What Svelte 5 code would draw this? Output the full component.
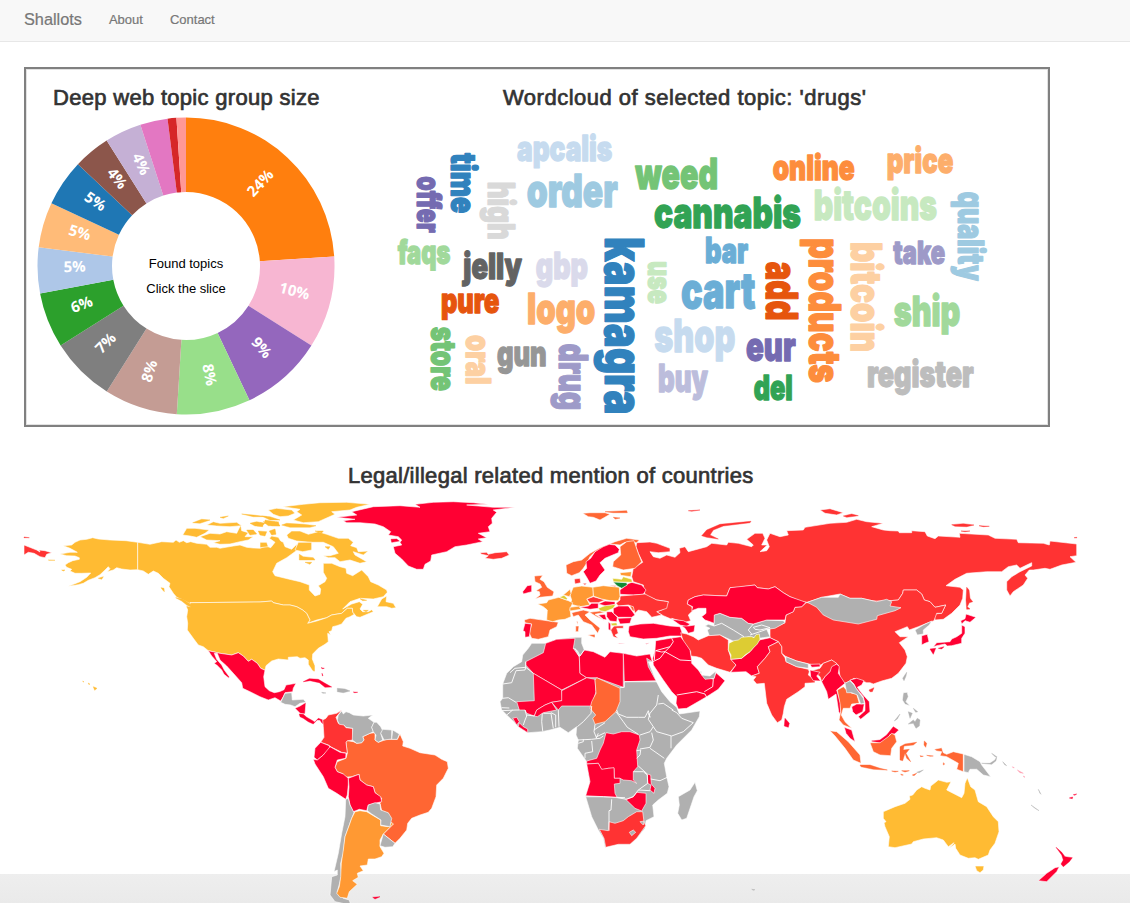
<script>
  const R = 148.5, r = 74;
  const slices = [
    [0, 86.3, '#ff7f0e', '24%'], [86.3, 122.4, '#f7b6d2', '10%'], [122.4, 154.7, '#9467bd', '9%'],
    [154.7, 183.55, '#98df8a', '8%'], [183.55, 212.25, '#c49c94', '8%'], [212.25, 237.6, '#7f7f7f', '7%'],
    [237.6, 259.3, '#2ca02c', '6%'], [259.3, 277.3, '#aec7e8', '5%'], [277.3, 295, '#ffbb78', '5%'],
    [295, 313.3, '#1f77b4', '5%'], [313.3, 327.7, '#8c564b', '4%'], [327.7, 342.1, '#c5b0d5', '4%'],
    [342.1, 352.85, '#e377c2', ''], [352.85, 356.3, '#d62728', ''], [356.3, 360, '#ff9896', '']
  ];
  const polar = (a, d) => {
    const t = (a * Math.PI) / 180;
    return [+(Math.sin(t) * d).toFixed(2), +(-Math.cos(t) * d).toFixed(2)];
  };
  const arc = ([a, b]) =>
    `M${polar(a, R)}A${R},${R} 0 0 1 ${polar(b, R)}L${polar(b, r)}A${r},${r} 0 0 0 ${polar(a, r)}Z`;
  const labelAt = ([a, b]) => {
    const m = (a + b) / 2;
    return `translate(${polar(m, 111.3)}) rotate(${m > 180 ? m + 90 : m - 90})`;
  };

  // word, start, end, baseline, ascender height, colour
  const across = [
    ['apcalis', 517, 612.3, 161.7, 25.3, '#c6dbef'], ['order', 526.7, 617.7, 207, 32.7, '#9ecae1'],
    ['weed', 635.3, 718, 189.3, 30.6, '#74c476'], ['cannabis', 654, 801, 228, 31, '#31a354'],
    ['faqs', 397.7, 450.3, 264.7, 23.7, '#a1d99b'], ['jelly', 463.3, 522, 279, 25.7, '#636363'],
    ['gbp', 535.7, 588, 278.9, 27, '#dadaeb'], ['pure', 441, 499.3, 313.7, 24.5, '#e6550d'],
    ['logo', 527, 595.3, 324, 30.7, '#fdae6b'], ['gun', 497, 546.7, 366.7, 25.5, '#969696'],
    ['cart', 681, 755.3, 308, 35.5, '#6baed6'], ['bar', 705, 748, 263, 25.5, '#6baed6'],
    ['shop', 654.3, 735.3, 352.3, 33, '#c6dbef'], ['buy', 658, 708, 392, 27.7, '#bcbddc'],
    ['online', 772.7, 854.7, 180, 25, '#fd8d3c'], ['price', 886.7, 953.3, 173, 25.5, '#fdae6b'],
    ['bitcoins', 813.7, 937, 220, 30, '#c7e9c0'], ['take', 893.3, 945, 264, 23, '#9e9ac8'],
    ['ship', 893.7, 960.3, 326, 30, '#a1d99b'], ['eur', 746, 795.7, 361, 28.5, '#756bb1'],
    ['del', 753.7, 792.7, 400, 24.7, '#31a354'], ['register', 867, 973.7, 387, 26, '#bdbdbd']
  ];
  const down = [
    ['kamagra', 237, 414.7, 605, 38.5, '#3182bd'], ['time', 153, 213.3, 450.7, 25.5, '#3182bd'],
    ['offer', 176.3, 232.7, 417, 24.3, '#756bb1'], ['high', 181.7, 240, 487.3, 26.7, '#d9d9d9'],
    ['store', 326.7, 391, 430.3, 25, '#74c476'], ['oral', 335, 384.7, 465.7, 25, '#fdd0a2'],
    ['drug', 343.7, 410, 558.3, 28.3, '#9e9ac8'], ['use', 261, 304, 648, 23, '#c7e9c0'],
    ['quality', 191.7, 281, 957.3, 25.7, '#9ecae1'], ['add', 261.7, 320.7, 765.7, 32, '#e6550d'],
    ['products', 238.3, 383, 808.5, 32, '#fd8d3c'], ['bitcoin', 242, 352.3, 851, 31, '#fdd0a2']
  ];
  const words = [
    ...across.map(([t, a, b, y, h, c]) => ({ t, w: b - a, h, c, tf: `translate(${a},${y - 0.4})` })),
    ...down.map(([t, a, b, x, h, c]) => ({ t, w: b - a, h, c, tf: `translate(${x + 0.4},${a}) rotate(90)` }))
  ];

  // Outlines are digitised per map sheet, three units to a pixel; a letter switches sheet.
  const sheets = {
    A: [20, 490], B: [260, 455], C: [260, 690], D: [490, 500],
    E: [490, 630], F: [670, 490], G: [870, 490], H: [780, 640]
  };
  function points(part) {
    let o = sheets.A;
    const pts = [];
    for (const tok of part.trim().split(/\s+/)) {
      if (sheets[tok]) { o = sheets[tok]; continue; }
      const [x, y] = tok.split(',').map(Number);
      pts.push([o[0] + x / 3, o[1] + y / 3]);
    }
    return pts;
  }
  const toPath = (pts) => 'M' + pts.map(([x, y]) => x.toFixed(1) + ',' + y.toFixed(1)).join('L');
  // Islands and slivers keep their own colour on the outline so that it does not eat them up.
  function isSliver(part, pts) {
    if (/^[DEF] /.test(part.trim())) return false;
    let area = 0, len = 0;
    pts.forEach(([x, y], i) => {
      const [u, v] = pts[(i + 1) % pts.length];
      area += x * v - u * y;
      len += Math.hypot(u - x, v - y);
    });
    return Math.abs(area) / 2 / len < 1.4;
  }

  const Y = '#ffbb33', C = '#ff0033', S = '#ff3333', O = '#ff6633', N = '#ff9933', G = '#b0b0b0', L = '#ddcc33', V = '#118833';
  const land = [
    // North America
    [Y, 'A 353,157 318,152 270,150 235,147 218,143 200,148 180,150 165,157 155,165 130,167 150,175 165,183 172,187 150,187 120,192 140,197 165,198 178,203 178,208 158,212 145,218 135,225 140,232 155,238 150,243 165,250 185,250 212,249 200,262 180,275 145,289 175,284 190,280 205,271 225,263 240,254 255,240 265,230 270,236 262,245 280,240 290,233 305,237 330,240 353,239'],
    [Y, 'A 353,157 390,163 425,155 460,157 468,150 478,157 490,152 500,158 512,155 530,160 560,163 570,172 590,172 600,175 640,168 660,165 680,172 700,174 720,175 B 18,273 32,278 45,262 28,250 35,243 55,247 62,258 70,262 75,275 95,283 110,268 112,285 80,308 50,325 38,350 45,362 85,372 120,380 148,390 148,405 165,423 180,418 182,402 175,392 195,380 200,370 190,352 190,325 215,325 240,335 258,340 260,355 278,362 305,345 325,365 332,380 355,390 380,405 382,412 370,425 340,432 300,430 270,440 248,462 275,447 298,440 308,448 300,462 308,470 325,470 335,464 340,470 300,487 290,485 278,472 277,460 262,460 245,475 215,480 200,488 170,495 143,505 150,495 145,485 140,475 128,465 110,455 90,450 70,450 40,443 35,438 0,441 A 510,338 515,350 517,345 490,330 470,322 460,310 447,290 450,280 430,265 415,250 400,243 385,253 370,243 353,239'],
    [Y, 'A 510,338 B 0,441 35,438 40,443 70,450 90,450 110,455 128,465 140,475 145,485 150,495 143,505 170,498 200,488 215,480 245,475 262,460 277,460 278,472 283,478 270,485 258,490 250,500 245,507 230,512 218,515 215,527 207,530 212,540 203,535 205,560 195,568 175,580 158,597 157,612 165,632 165,650 158,648 145,628 145,615 135,608 120,610 112,605 85,607 85,615 55,612 35,618 18,632 A 735,541 722,535 712,520 695,508 685,514 670,498 655,488 635,495 600,490 565,482 550,470 535,465 520,445 502,420 503,400 500,380 503,360 498,347 512,350'],
    [Y, 'A 467,323 490,328 505,338 516,345 517,353 500,345 485,333|A 423,293 432,295 433,305 428,300|A 235,265 250,260 245,268|A 220,590 231,595 224,601|A 188,573 192,576 190,576|A 205,579 210,583 206,583|A 85,210 105,211 88,211|A 125,240 135,240 130,243'],
    [Y, 'A 488,135 500,115 525,115 568,120 555,130 530,142 510,138|A 540,140 570,130 600,132 620,125 650,130 662,105 665,122 685,128 675,140 700,140 685,150 660,155 630,162 600,163 580,158 600,152 560,150|A 518,98 545,88 570,90 540,100|A 560,105 580,95 600,100 650,97 665,107 630,110 590,108|A 690,100 710,95 735,100 725,108 705,108|A 665,72 700,75 740,80 700,80|A 600,82 625,78 610,85|A 680,120 700,120 710,132 690,135|A 735,90 765,95 760,103 735,100|B 25,165 50,160 95,165 105,175 85,183 60,185 40,178|B 68,155 130,148 180,143 260,142 330,148 290,157 270,165 215,170 225,178 175,200 130,203 100,195 125,180 110,170 120,163|B 65,210 80,205 130,208 168,212 150,217 90,217|B 5,183 30,185 60,195 30,195|B 10,200 50,200 60,213 25,212|B 0,203 10,205 8,215 -10,213|B -5,228 20,230 15,243 0,240|B 28,228 45,222 48,238 35,240|B 30,205 55,200 58,212 35,212|B 0,262 20,262 25,275 0,278'],
    [Y, 'B 80,240 95,228 120,228 145,238 175,230 200,238 235,250 265,250 280,262 272,272 290,278 295,290 325,288 310,300 280,290 285,300 320,320 300,325 270,315 240,320 225,308 205,308 190,302 210,302 235,295 220,275 190,262 150,262 110,258 85,250|B 118,298 130,305 160,308 165,315 140,315 118,315|B 105,285 115,262 155,262 155,285 128,290|B 352,455 365,432 380,423 378,440 400,445 408,458 395,460 380,455|B 135,322 155,322 150,328|B 165,228 190,228 185,234|B 195,275 210,275 205,283|B 310,466 325,466 318,470|B 300,431 320,436 308,437'],
    [C, 'B 230,187 290,180 275,170 340,155 420,152 480,157 465,148 520,142 580,140 640,143 685,148 620,150 700,157 765,157 700,165 710,172 695,190 697,205 685,215 690,230 655,235 680,248 655,252 668,260 620,270 585,275 560,290 515,300 512,318 495,328 490,343 470,343 445,333 425,312 405,295 400,275 425,270 420,262 425,255 415,245 385,240 392,230 370,215 345,207 300,203 260,203 250,197 285,193|B 393,253 410,252 418,258 395,262'],
    [S, 'B 660,293 680,292 685,298 705,293 740,290 748,300 725,310 700,313 675,310 685,302 665,298|A 12,165 50,180 60,186 57,180 75,182 95,188 80,193 75,203 60,200 42,190 25,187 12,195|A 12,141 28,143 12,143'],
    [C, 'A 565,482 600,490 635,495 655,488 670,498 685,514 695,508 712,520 722,535 735,541 731,560 735,590 748,602 763,608 B 58,710 72,704 78,690 108,685 100,700 98,710 75,713 70,725 62,738 45,728 25,735 0,725 A 690,605 668,595 665,578 640,550 620,528 600,510 592,490 583,490 590,508 605,525 613,540 628,560 627,565 612,553 605,540 590,525 582,520 590,515 575,498'],
    [C, 'B 130,680 148,671 175,673 195,685 215,696 195,697 178,683 150,677|B 280,711 293,712 284,713|B 183,638 193,640 188,641|B 186,655 189,662 187,662|C 105,55 120,48 138,37 135,72 120,70|C 118,72 130,73 140,82 158,92 165,97 175,85 188,90 190,102 185,98 180,90 170,90 160,102 145,95 130,85 120,80'],
    [G, 'B 75,715 95,713 97,735 130,733 138,742 120,745 105,755 92,750 75,748 62,742|B 232,700 255,702 270,708 250,713 232,710|B 185,712 198,714 188,715'],
    // South America
    [O, 'C 345,128 345,150 355,157 380,148 412,148 420,132 430,155 428,168 450,175 480,188 525,195 545,208 562,215 565,235 550,265 530,285 528,320 515,355 505,367 480,375 455,385 443,400 440,420 420,445 405,460 370,432 400,402 390,398 385,370 365,362 360,340 365,325 345,308 340,290 320,285 300,270 297,253 275,260 250,262 250,252 232,245 225,232 232,215 258,205 262,190 258,157 262,152 280,155 290,160 305,158 312,150 308,140 330,130'],
    [S, 'C 188,90 198,85 205,75 230,70 245,60 238,70 228,82 235,100 250,102 258,113 278,115 280,150 262,152 258,157 262,190 245,187 215,172 205,165 182,157 192,142 190,110'],
    [G, 'C 245,63 235,75 232,90 238,103 252,105 258,112 278,115 277,150 290,160 305,158 312,150 308,140 330,130 340,125 335,112 342,97 325,85 338,75 310,78 280,75 268,68 258,65 250,72|C 342,97 350,97 362,110 368,122 362,130 368,150 355,157 345,150 348,135 340,125 335,112|C 368,118 395,120 395,147 372,150 362,130|C 398,120 418,132 412,148 395,148'],
    [C, 'C 182,157 208,167 210,178 190,195 172,210 162,202 165,175|C 210,170 240,187 258,190 257,205 232,210 225,232 232,245 250,252 265,265 265,285 262,315 257,328 230,310 205,295 190,260 165,222 160,208 172,210 190,195|C 265,265 297,253 300,270 320,285 340,290 345,308 362,320 365,335 345,340 325,345 320,362 298,358 280,365 270,345 265,320 267,290|C 338,622 360,620 345,627'],
    [G, 'C 257,328 265,325 270,345 282,368 275,385 268,405 255,440 250,490 242,520 244,560 232,605 250,625 268,630 272,645 225,635 210,615 215,560 232,555 232,540 222,545 235,490 245,430 255,380'],
    [N, 'C 285,365 300,362 320,365 340,377 362,390 362,407 385,410 395,397 400,402 370,432 360,450 360,470 372,490 365,500 345,507 325,507 322,525 300,528 310,542 292,550 295,562 278,572 292,583 268,605 262,625 240,622 230,610 238,590 242,560 244,520 250,480 255,440 268,405 275,385'],
    [G, 'C 325,345 345,338 360,342 362,360 385,368 395,385 390,410 362,405 363,390 335,372 322,362|C 370,432 405,460 398,470 375,472 360,467'],
    // Russia
    [S, 'D 440,128 480,126 500,130 540,145 540,155 505,158 480,155 490,170 510,175 530,165 555,172 570,158 568,145 F 45,170 55,185 110,170 125,160 170,165 175,157 205,160 245,170 250,165 230,148 255,130 278,130 285,145 275,165 292,165 270,185 290,182 298,170 290,150 300,130 330,140 355,135 350,122 400,120 405,112 480,100 530,97 560,88 590,95 640,100 605,110 640,120 660,122 G 85,123 88,128 125,128 125,122 165,125 172,138 195,146 205,138 270,142 268,130 355,135 375,145 440,148 445,158 520,160 538,165 540,153 620,162 620,197 600,200 618,217 575,225 540,238 525,235 490,240 478,240 465,255 473,265 460,285 430,305 420,318 410,300 410,275 425,260 450,245 485,228 485,218 470,225 450,235 440,225 415,230 395,245 350,245 290,250 255,268 228,287 270,292 280,300 278,325 270,345 245,370 220,388 195,390 192,372 215,370 227,345 195,352 180,335 163,330 155,312 140,300 100,300 98,310 85,330 60,332 F 620,335 575,325 540,325 510,312 455,322 412,337 395,335 360,320 340,308 315,290 295,297 262,293 255,285 205,292 180,293 170,318 100,315 75,320 55,330 52,342 65,350 68,362 55,375 62,392 45,397 5,385 D 545,358 520,347 500,335 515,330 525,325 535,305 500,300 465,285 460,255 430,245 425,230 430,205 458,187 445,160 438,140'],
    [S, 'G -505,137 -490,120 -450,103 -357,94 -360,98 -440,108 -470,120 -480,135 -455,147 -490,142|G -150,60 -120,56 -80,68 -100,75 -135,70|G -80,78 -55,72 -35,77 -70,82|G 245,104 280,101 312,105 290,110 255,109|G 327,107 358,109 340,110|G 273,123 300,123 285,125|G 612,143 620,142 620,144|G 290,292 297,300 300,325 308,335 298,338 292,350 300,357 290,358 288,330|G -545,62 -510,60 -535,64|D 358,256 380,257 375,261'],
    [O, 'D 278,40 300,38 345,38 360,43 330,60 310,52 295,50|B 1035,170 1100,167 1102,173 1060,173|B 1060,187 1080,189 1066,192'],
    // Europe
    [O, 'D 228,195 250,185 275,180 300,160 330,143 375,125 410,115 448,120 440,128 405,127 390,135 360,132 335,148 315,155 300,170 290,190 280,205 268,218 245,227 230,220|D 390,140 410,125 432,122 438,140 445,160 455,185 435,205 400,210 368,200 370,185 392,165|D 133,228 158,226 150,238 162,245 172,262 192,275 188,288 150,292 135,297 150,285 148,275 138,272 155,262 150,252 135,245|D 245,338 280,330 300,335 285,345 300,360 325,380 330,385 323,400 305,375 280,365 265,345 250,350|D 293,405 315,403 315,413|D 257,378 267,378 265,395 257,395|D 260,363 264,365 262,375|D 103,360 120,355 205,367 200,380 180,390 175,410 145,418 125,415 118,400 125,372 105,368|D 298,337 330,333 345,337 315,343 345,362 320,350|D 418,315 435,320 442,332 428,333'],
    [C, 'D 302,175 315,155 340,140 358,133 375,135 388,148 385,158 368,165 345,175 330,188 345,210 330,225 318,243 300,250 292,235 280,215 290,205 288,185|D 98,275 112,257 125,255 125,275 100,282|D 105,370 124,372 118,410 105,412 105,395 99,392|D 390,270 412,252 425,247 455,255 468,270 460,283 430,285 390,283'],
    [S, 'D 253,237 270,235 272,248 255,252|D 278,250 290,250 285,256|D 390,288 430,285 465,282 500,300 535,305 530,325 500,335 515,345 485,352 470,335 445,330 435,340 430,320 415,315 385,318 378,310 390,300|D 290,297 310,290 345,300 325,308 300,308|D 362,390 372,378 400,377 400,385 380,385 385,400 375,405 385,415 370,410'],
    [N, 'D 308,262 340,257 388,262 390,290 385,302 360,302 335,297 310,288|D 250,262 275,258 308,262 310,288 290,297 300,315 270,320 240,312 245,300 240,285|D 220,285 240,268 243,280 238,290|D 143,312 170,308 175,300 207,292 235,302 248,308 240,328 243,350 225,358 205,360 188,365 170,360 172,330 160,320|D 240,322 270,318 272,328 240,333|D 390,218 425,215 422,230 392,226'],
    [L, 'D 208,292 222,286 232,295 230,300|D 368,235 395,238 400,230 425,238 427,247 370,246|D 325,325 345,317 378,312 370,325 345,335 330,332|D 362,370 380,368 382,377 365,377'],
    [V, 'D 370,246 410,248 412,255 395,265 382,258'],
    [C, 'D 325,312 345,303 375,305 375,313 345,317|D 268,322 295,318 305,310 325,310 325,325 300,328|D 370,325 385,318 415,318 428,335 435,345 425,352 385,352 370,340|D 383,355 425,353 420,370 390,372|D 325,345 345,343 350,360 340,358|D 350,335 365,335 382,352 380,365 360,363 350,350|D 355,365 362,372 362,392 355,388|D 417,378 450,372 490,370 540,378 570,380 580,408 540,408 500,415 460,417 420,410 415,395|D 545,358 580,362 600,372 590,380 570,375|D 575,378 595,378 615,375 612,395 595,400 585,385|D 466,431 478,428 470,433|D 383,430 405,432 388,432'],
    // Asia
    [S, 'F 408,338 G 60,332 85,330 98,310 100,300 140,300 155,312 163,330 180,335 195,352 227,345 215,370 200,370 192,392 170,400 145,410 118,420 112,410 75,425 90,440 115,440 88,458 105,480 112,500 108,520 85,550 65,565 35,573 10,582 0,578 F 590,578 575,572 552,565 530,578 520,580 510,560 505,525 485,510 460,520 445,530 418,522 380,513 348,500 335,490 335,470 325,455 300,443 300,415 315,412 345,398 348,375 370,365 375,352 395,350|G -3,600 12,593 7,605 0,605'],
    [G, 'F 412,337 455,322 505,322 510,312 540,325 575,325 620,335 G 50,328 65,335 60,348 93,353 75,362 22,377 20,388 F 565,402 490,390 460,375 440,352'],
    [G, 'F 132,375 150,370 180,382 215,385 235,400 250,402 290,390 340,392 345,398 315,415 290,418 300,440 268,445 235,440 200,458 150,435 118,437 112,420 120,415 105,408 115,403 132,408|G 98,565 110,547 108,558 102,572|G 135,420 160,405 185,393 178,405 160,420 160,432 142,435'],
    [C, 'F 55,330 75,320 100,315 170,318 180,293 255,285 262,293 295,297 315,290 340,308 360,320 408,337 395,350 375,352 370,365 348,375 345,390 290,390 250,402 235,400 215,385 180,382 150,370 133,375 132,400 120,395 105,390 95,380 108,370 108,355 85,355 65,362 68,350 52,342'],
    [S, 'F 32,428 50,432 70,440 85,450 115,437 150,435 175,450 175,480 185,510 198,525 180,547 140,535 115,525 95,505 80,500 62,498 62,485 40,455'],
    [C, 'F 182,508 215,505 240,485 268,450 300,443 325,455 295,470 300,485 285,505 262,530 268,550 245,558 228,545 182,547 198,525'],
    [L, 'F 177,460 192,452 205,450 215,442 235,440 245,440 252,443 258,434 268,432 270,448 262,462 252,472 240,485 225,495 215,505 182,508 183,495 175,480'],
    [S, 'F 325,455 335,470 335,490 345,503 348,515 380,530 415,538 418,545 415,555 435,570 435,578 405,580 405,590 385,605 350,628 343,650 340,670 335,690 322,698 305,675 290,640 283,580 260,582 250,570 258,560 245,558 268,550 262,530 285,505 300,485 295,470|F 450,535 460,520 485,510 500,520 480,545 465,560 455,575 450,560 425,542'],
    [G, 'F 348,500 380,513 415,522 415,535 380,530 348,515'],
    [C, 'F 420,523 450,522 450,530 425,532|F 420,540 450,547 440,558 452,573 430,572 422,560|G -255,685 -242,700 -245,712 -257,708|F 455,575 465,560 480,545 485,530 500,522 508,530 505,550 525,580 510,592 500,600 512,640 512,675 506,665 498,612 475,628 470,605'],
    [O, 'F 502,600 520,590 530,600 545,610 560,612 568,640 545,642 540,655 520,655 514,675 525,695 545,715 520,705 507,690 512,665 510,640'],
    [C, 'F 540,570 560,565 582,572 575,585 562,592 575,610 598,635 600,665 572,688 565,680 585,662 585,640 580,620 558,595 552,582|F 545,650 560,642 583,642 578,665 558,675 548,665'],
    [G, 'F 525,580 540,572 552,585 558,595 580,625 583,640 572,642 562,615 545,608 530,608'],
    [C, 'G 155,437 172,433 177,455 165,460 155,465|G 288,372 318,382 300,397 285,392 275,402 272,392 285,386|G 275,405 285,410 285,430 275,445 275,460 245,467 232,468 225,462 200,467 190,470 200,458 240,455 245,447 260,440 275,430|G 180,477 197,475 190,493 185,485|G 205,475 222,470 215,477'],
    [C, 'E 497,32 540,25 572,20 600,60 605,92 F 65,520 85,540 95,555 130,568 138,548 165,572 145,598 110,620 50,655 25,657 18,640 E 560,200 545,185 520,150 490,105 488,85 495,60'],
    [G, 'F 95,555 120,558 138,543 133,565 105,568|F 90,543 95,545 94,552'],
    // Africa
    [G, 'E 125,40 167,40 200,28 255,22 275,22 275,40 283,60 310,65 345,82 360,65 400,70 440,78 480,72 487,95 475,95 498,152 515,185 540,215 560,232 568,252 630,243 628,260 605,300 560,345 530,385 523,400 530,440 537,470 532,490 505,510 488,525 492,560 468,572 465,595 440,625 420,643 385,643 345,652 340,625 325,600 305,560 287,500 300,460 290,395 262,355 265,330 258,315 260,290 235,308 210,292 180,300 155,305 115,308 85,290 68,272 50,255 35,240 30,215 38,205 38,162 50,130 70,110 95,95 98,75 115,55|E 615,457 622,482 612,500 590,565 575,570 563,550 568,525 565,500 600,480'],
    [C, 'E 167,40 200,28 255,25 250,55 268,80 270,130 290,143 215,180 130,130 107,105 107,95 160,68|E 283,60 310,65 345,82 360,65 400,70 400,172 320,143 290,143 270,130 268,80|E 400,70 440,78 480,72 487,95 470,85 475,110 498,152 403,155|E 130,130 215,180 217,212 185,217 165,225 140,240 133,258 110,250 105,240 88,240 80,215 133,212|E 133,258 140,240 165,225 185,217 200,240 160,248 142,260|E 215,182 290,143 315,148 318,185 305,228 215,228 205,240 185,217 215,212|E 348,308 370,312 395,305 420,305 448,315 450,330 440,360 443,410 430,425 430,450 440,460 425,452 400,450 390,445 373,445 372,415 355,415 335,420 325,400 290,402 290,393 320,385 330,360 340,340|E 290,402 325,400 335,418 355,415 372,413 373,445 390,445 390,460 373,462 375,490 382,503 340,500 287,497 300,455|E 407,508 430,500 440,487 468,490 468,520 455,543 435,535|E 472,432 482,435 484,462 495,475 492,490 480,480 483,465 473,460|E 68,265 80,262 88,275 80,285|E 88,278 100,290 113,297 113,308 85,290'],
    [O, 'E 320,143 390,175 390,215 378,245 345,275 315,283 308,265 317,255 300,235 305,215 318,190 315,150'],
    [S, 'E 328,598 355,602 357,575 375,580 400,572 415,560 440,545 458,545 462,575 467,587 440,625 420,643 385,643 347,652 342,625'],
    [G, 'E 418,607 430,600 437,607 425,617|E 450,575 462,573 460,585'],
    // Oceania and the archipelagos
    [C, 'H 193,262 215,270 225,305 210,295 198,280|H 275,303 300,300 320,285 340,260 355,270 345,280 330,282 320,300 300,308|H 868,474 878,471 877,476|H 880,464 890,462 884,466|H 828,622 845,637 855,650 877,653 868,665 850,680 843,672 850,660 845,645|H 838,680 830,695 800,725 775,722 800,700 825,683'],
    [O, 'H 150,272 170,275 205,305 240,345 243,370 220,360 195,325 165,288|H 240,375 270,375 300,385 322,390 280,388 243,380|H 335,393 355,394 345,396|H 365,392 388,392 375,396|H 362,402 370,405 365,406|H 397,405 410,400 402,407|H 270,308 300,308 325,290 335,280 345,285 350,305 335,325 332,347 300,345 280,335|H 360,320 375,312 410,307 400,315 372,318 370,330 388,328 378,340 392,365 380,355 375,340 368,362 360,360|H 433,303 440,310 437,322 432,315|H 420,347 430,349 422,350|H 440,346 460,348 450,349|H 490,368 494,372 490,375|H 462,328 485,323 490,338 500,343 520,335 550,342 550,395 530,388 535,370 500,350 480,347 485,335 470,333'],
    [G, 'H 552,343 575,350 600,365 605,375 632,410 610,405 590,388 570,388 565,398 552,395|H 605,370 630,370 645,360 650,350 648,362 635,373|H 635,340 650,350 645,350|H 668,365 680,377 674,374|H 370,158 382,157 385,170 378,185 390,197 375,193 367,180|H 400,240 405,245 412,235 420,240 418,258 408,265 400,250 385,252|H 385,215 397,220 390,235|H 400,205 413,215 407,217|H 343,243 360,222 352,237|H 410,397 430,390 418,398|H 753,495 777,512 765,505|H 775,448 783,463 780,460|C 1475,598 1485,599 1480,601'],
    ['#ff9aad', 'H 697,380 703,383 699,383|H 712,390 730,400 720,398|H 730,408 735,411 732,412'],
    [Y, 'H 310,515 345,500 375,490 390,478 388,468 398,465 410,450 425,440 435,445 450,450 452,438 463,430 475,420 500,427 513,425 500,450 545,473 552,460 555,430 562,413 572,440 585,450 595,485 620,500 640,530 655,545 657,575 645,610 630,630 625,645 595,658 585,653 565,655 540,645 527,625 525,612 508,625 522,608 505,620 490,600 470,593 430,597 400,605 395,612 345,623 325,620 328,590 315,560 312,548 318,545 310,535|H 585,678 612,678 610,690 600,698 590,692']
  ];
  const borders = [
    // Central Asia and the Middle East
    'F 132,408 155,400 190,420 222,440', 'F 250,402 235,420 245,432', 'F 250,412 275,405 300,413 270,420 255,418 250,412', 'F 290,418 270,425 240,435',
    'E 497,62 540,50 550,35 545,25', 'E 488,95 510,85 525,65 570,90 605,92', 'E 497,62 515,66 525,65 540,50', 'F 20,615 80,605 105,612 110,622', 'F 103,605 128,590 130,568', 'E 495,62 493,90',
    // Africa
    'E 107,95 107,112 75,115 60,128', 'E 107,112 105,120 78,122 65,158 38,162', 'E 105,110 130,130', 'E 38,205 55,203 78,217', 'E 35,233 58,234', 'E 35,242 78,240 88,240', 'E 50,255 68,240', 'E 105,240 110,258 105,270 100,285', 'E 110,255 133,258', 'E 157,250 155,275 158,303', 'E 160,250 183,250 190,295', 'E 183,248 197,255 197,292', 'E 205,240 207,290',
    'E 305,228 303,250 280,275 262,290', 'E 315,283 312,305 320,325', 'E 312,300 345,278', 'E 378,245 400,275 412,292 445,313', 'E 320,320 345,308', 'E 390,173 403,172 403,155 505,155', 'E 380,240 385,252 410,262 445,262 465,262 475,242 480,262 475,250',
    'E 505,195 500,225 480,250 475,268 490,290 480,305 450,315', 'E 505,222 520,220 550,240', 'E 545,240 560,248 575,265 610,278 580,305 545,318 500,305 490,290', 'E 543,318 543,355', 'E 485,308 490,330 480,352 450,357', 'E 480,355 523,385', 'E 440,362 452,360 450,375 440,385', 'E 445,408 472,432', 'E 482,447 510,452 532,442', 'E 430,425 460,425 472,435 473,460 445,480 430,500 410,508 382,503', 'E 480,482 445,480',
    'E 287,500 340,500 405,503', 'E 365,508 363,540 357,542 357,602', 'E 255,55 268,80', 'E 263,330 305,328 330,325 340,318', 'E 265,340 280,335 280,328', 'E 305,333 308,365 285,370 285,385', 'E 250,55 262,62 270,78 283,60', 'E 318,325 325,310'
  ];
  const shapes = land.flatMap(([fill, src]) =>
    src.split('|').map((part) => {
      const pts = points(part);
      const thin = isSliver(part, pts);
      return { fill, d: toPath(pts) + 'Z', line: thin ? fill : '#fff', w: thin ? 0.4 : 0.6 };
    })
  );
  const lines = borders.map((src) => toPath(points(src))).join('');
</script>

<div class="page">
  <nav>
    <a class="brand" href="#top">Shallots</a>
    <a href="#about">About</a>
    <a href="#contact">Contact</a>
  </nav>

  <section class="panel">
    <div class="topics">
      <h2>Deep web topic group size</h2>
      <svg class="donut" viewBox="-149 -149 298 298">
        {#each slices as s}
          <path d={arc(s)} fill={s[2]} />
          {#if s[3]}<text class="pct" transform={labelAt(s)} y="2.6">{s[3]}</text>{/if}
        {/each}
        <text class="hint" y="2.4">Found topics</text>
        <text class="hint" y="27.4">Click the slice</text>
      </svg>
    </div>
    <div class="cloud">
      <h2>Wordcloud of selected topic: 'drugs'</h2>
      <svg viewBox="390 117 610 300">
        {#each words as w}
          <text class="word" transform={w.tf} font-size={w.h * 1.38} textLength={w.w} lengthAdjust="spacingAndGlyphs" fill={w.c} stroke={w.c}>{w.t}</text>
        {/each}
      </svg>
    </div>
  </section>

  <section class="world">
    <h2>Legal/illegal related mention of countries</h2>
    <svg viewBox="24 494 1054 380">
      {#each shapes as s}<path d={s.d} fill={s.fill} stroke={s.line} stroke-width={s.w} />{/each}
      <path class="border" d={lines} />
    </svg>
  </section>
  <footer></footer>
</div>

<style>
  :global(body) { margin: 0; background: #fff; }
  .page { width: 1130px; height: 903px; overflow: hidden; font-family: "Liberation Sans", Arial, sans-serif; color: #333; }
  nav { box-sizing: border-box; height: 42px; padding: 0 24px 3px; display: flex; align-items: center; background: #f8f8f8; border-bottom: 1px solid #e7e7e7; }
  nav a { color: #777; text-decoration: none; font-size: 13px; margin-right: 27px; -webkit-text-stroke: 0.2px #777; }
  nav .brand { font-size: 16.3px; padding-top: 1px; }
  h2 { margin: 0; font-size: 22px; letter-spacing: 0.3px; line-height: 26px; font-weight: 400; white-space: nowrap; -webkit-text-stroke: 0.7px #333; }
  .panel { box-sizing: border-box; display: flex; width: 1026px; height: 360px; margin: 25px 0 0 24px; border: 2px solid #808080; box-shadow: inset 0 0 0 1px #e2e2e2; }
  .topics { width: 364px; padding-top: 16px; }
  .topics h2 { margin-left: 27px; }
  .donut { display: block; width: 298px; height: 298px; margin: 6px 0 0 11px; }
  .pct { font: 700 15px "Open Sans", sans-serif; fill: #fff; text-anchor: middle; }
  .hint { font-size: 13px; fill: #000; text-anchor: middle; }
  .cloud { width: 610px; padding-top: 16px; }
  .cloud h2 { margin-left: 113px; letter-spacing: 0.5px; }
  .cloud svg { display: block; width: 610px; height: 300px; margin-top: 6px; overflow: visible; }
  .word { font-family: Inter, Roboto, sans-serif; font-weight: 900; stroke-width: 1.3px; stroke-linejoin: round; }
  .world { width: 1054px; margin: 36px 0 0 24px; }
  .world h2 { margin-left: 324px; letter-spacing: 0.28px; }
  .world svg { display: block; position: relative; z-index: 1; width: 1054px; height: 380px; margin-top: 5px; overflow: visible; }
  .world path { stroke-linejoin: round; }
  .world .border { fill: none; stroke: #fff; stroke-width: 0.9; }
  footer { height: 29px; background: linear-gradient(#eee, #eaeaea); }
</style>
